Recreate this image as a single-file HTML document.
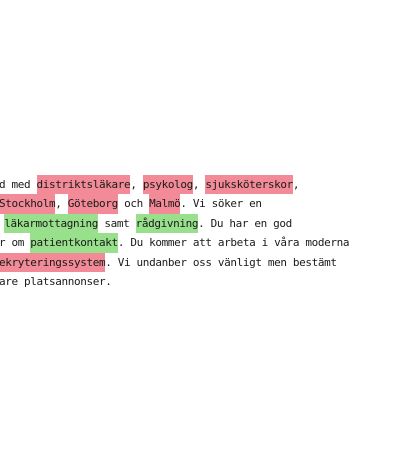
<!DOCTYPE html>
<html><head><meta charset="utf-8"><style>
html,body{margin:0;padding:0;width:400px;height:450px;background:#fff;overflow:hidden}
.l{position:absolute;white-space:pre;font-family:"DejaVu Sans Mono","Liberation Mono",monospace;font-size:11px;letter-spacing:-0.37px;line-height:19.5px;height:19.5px;color:#1a1a1a}
.p{background:#f28b97;display:inline-block;height:19.5px}
.g{background:#98e08c;display:inline-block;height:19.5px}
</style></head><body>
<div class="l" style="left:-1px;top:174.5px">d med <span class="p">distriktsläkare</span>, <span class="p">psykolog</span>, <span class="p">sjuksköterskor</span>,</div>
<div class="l" style="left:-1px;top:194px"><span class="p">Stockholm</span>, <span class="p">Göteborg</span> och <span class="p">Malmö</span>. Vi söker en</div>
<div class="l" style="left:-2px;top:213.5px"> <span class="g">läkarmottagning</span> samt <span class="g">rådgivning</span>. Du har en god</div>
<div class="l" style="left:-1px;top:233px">r om <span class="g">patientkontakt</span>. Du kommer att arbeta i våra moderna</div>
<div class="l" style="left:-1px;top:252.5px"><span class="p">ekryteringssystem</span>. Vi undanber oss vänligt men bestämt</div>
<div class="l" style="left:-1px;top:272px">are platsannonser.</div>
</body></html>
